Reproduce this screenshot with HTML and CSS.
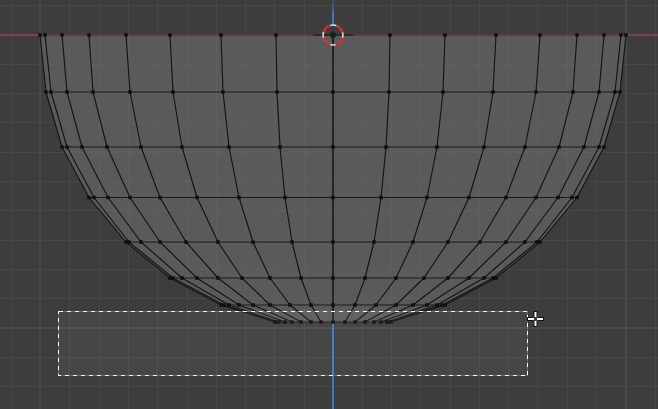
FILE: index.html
```html
<!DOCTYPE html>
<html lang="en">
<head>
<meta charset="utf-8">
<title>Viewport</title>
<link rel="stylesheet" href="styles.css">
</head>
<body>
<svg class="viewport" width="658" height="409" viewBox="0 0 658 409" xmlns="http://www.w3.org/2000/svg">
  <defs>
    <linearGradient id="blueFade" gradientUnits="userSpaceOnUse" x1="0" y1="0" x2="0" y2="16">
      <stop offset="0" stop-color="#3f4a56"/>
      <stop offset="1" stop-color="#4079b8"/>
    </linearGradient>
    <clipPath id="meshClip">
      <path d="M40 35H626L620 92 604 147 577 197.5 540 242 496 278 445 305 391 322H275L221 305 170 278 126 242 89 197.5 62 147 46 92Z"/>
    </clipPath>
  </defs>
  <path class="grid" d="M11.5 0V409M69.5 0V409M99.5 0V409M128.5 0V409M157.5 0V409M187.5 0V409M216.5 0V409M245.5 0V409M274.5 0V409M304.5 0V409M362.5 0V409M391.5 0V409M420.5 0V409M450.5 0V409M479.5 0V409M508.5 0V409M537.5 0V409M567.5 0V409M596.5 0V409M655.5 0V409M0 5.5H658M0 64.5H658M0 93.5H658M0 122.5H658M0 152.5H658M0 181.5H658M0 210.5H658M0 240.5H658M0 269.5H658M0 298.5H658M0 357.5H658M0 386.5H658"/>
  <path class="grid-major" d="M40 0V409M626 0V409M0 328H658"/>
  <path class="axis-red" d="M0 35H658"/>
  <path class="axis-blue-top" d="M333 0V30"/>
  <path class="axis-blue" d="M333 30V409"/>
  <path class="mesh-fill" d="M40 35H626L620 92 604 147 577 197.5 540 242 496 278 445 305 391 322H275L221 305 170 278 126 242 89 197.5 62 147 46 92Z"/>
  <g class="mesh-clip">
    <path class="grid-over" d="M69.5 0V409M99.5 0V409M128.5 0V409M157.5 0V409M187.5 0V409M216.5 0V409M245.5 0V409M274.5 0V409M304.5 0V409M362.5 0V409M391.5 0V409M420.5 0V409M450.5 0V409M479.5 0V409M508.5 0V409M537.5 0V409M567.5 0V409M596.5 0V409M0 64.5H658M0 93.5H658M0 122.5H658M0 152.5H658M0 181.5H658M0 210.5H658M0 240.5H658M0 269.5H658M0 298.5H658"/>
  </g>
  <path class="axis-dark-red" d="M40 35H626"/>
  <path class="axis-dark-blue" d="M333 35V322"/>
  <g class="edges">
    <path d="M40 35L46 92 62 147 89 197.5 126 242 170 278 221 305 275 322"/>
    <path d="M45 35L51 92 67 147 94 197.5 129 242 173 278 224 305 277 322"/>
    <path d="M62 35L67 92 82 147 108 197.5 141 242 182 278 229 305 279 322"/>
    <path d="M89 35L93 92 107 147 130 197.5 160 242 197 278 239 305 285 322"/>
    <path d="M126 35L130 92 141 147 160 197.5 186 242 218 278 253 305 292 322"/>
    <path d="M170 35L173 92 182 147 197 197.5 218 242 242 278 270 305 301 322"/>
    <path d="M221 35L223 92 229 147 239 197.5 253 242 270 278 290 305 311 322"/>
    <path d="M276 35L277 92 280 147 285 197.5 292 242 301 278 311 305 321 322"/>
    <path d="M333 35V322"/>
    <path d="M390 35L389 92 386 147 381 197.5 374 242 365 278 355 305 345 322"/>
    <path d="M445 35L443 92 437 147 427 197.5 413 242 396 278 376 305 355 322"/>
    <path d="M496 35L493 92 484 147 469 197.5 448 242 424 278 396 305 365 322"/>
    <path d="M540 35L536 92 525 147 506 197.5 480 242 448 278 413 305 374 322"/>
    <path d="M577 35L573 92 559 147 536 197.5 506 242 469 278 427 305 381 322"/>
    <path d="M604 35L599 92 584 147 558 197.5 525 242 484 278 437 305 387 322"/>
    <path d="M621 35L615 92 599 147 572 197.5 537 242 493 278 442 305 389 322"/>
    <path d="M626 35L620 92 604 147 577 197.5 540 242 496 278 445 305 391 322"/>
  </g>
  <g class="rows">
    <path d="M46 92H620"/>
    <path d="M62 147H604"/>
    <path d="M89 197.5H577"/>
    <path d="M126 242H540"/>
    <path d="M170 278H496"/>
    <path d="M221 305H445"/>
    <path d="M275 322H391"/>
  </g>
  <path class="verts" d="M40 35h0M45 35h0M62 35h0M89 35h0M126 35h0M170 35h0M221 35h0M276 35h0M333 35h0M390 35h0M445 35h0M496 35h0M540 35h0M577 35h0M604 35h0M621 35h0M626 35h0
  M46 92h0M51 92h0M67 92h0M93 92h0M130 92h0M173 92h0M223 92h0M277 92h0M333 92h0M389 92h0M443 92h0M493 92h0M536 92h0M573 92h0M599 92h0M615 92h0M620 92h0
  M62 147h0M67 147h0M82 147h0M107 147h0M141 147h0M182 147h0M229 147h0M280 147h0M333 147h0M386 147h0M437 147h0M484 147h0M525 147h0M559 147h0M584 147h0M599 147h0M604 147h0
  M89 197.5h0M94 197.5h0M108 197.5h0M130 197.5h0M160 197.5h0M197 197.5h0M239 197.5h0M285 197.5h0M333 197.5h0M381 197.5h0M427 197.5h0M469 197.5h0M506 197.5h0M536 197.5h0M558 197.5h0M572 197.5h0M577 197.5h0
  M126 242h0M129 242h0M141 242h0M160 242h0M186 242h0M218 242h0M253 242h0M292 242h0M333 242h0M374 242h0M413 242h0M448 242h0M480 242h0M506 242h0M525 242h0M537 242h0M540 242h0
  M170 278h0M173 278h0M182 278h0M197 278h0M218 278h0M242 278h0M270 278h0M301 278h0M333 278h0M365 278h0M396 278h0M424 278h0M448 278h0M469 278h0M484 278h0M493 278h0M496 278h0
  M221 305h0M224 305h0M229 305h0M239 305h0M253 305h0M270 305h0M290 305h0M311 305h0M333 305h0M355 305h0M376 305h0M396 305h0M413 305h0M427 305h0M437 305h0M442 305h0M445 305h0
  M275 322h0M277 322h0M279 322h0M285 322h0M292 322h0M301 322h0M311 322h0M321 322h0M333 322h0M345 322h0M355 322h0M365 322h0M374 322h0M381 322h0M387 322h0M389 322h0M391 322h0"/>
  <g class="cursor3d">
    <path class="cross" d="M313 35H353M333 25V54"/>
    <circle class="ring-white" cx="333" cy="35" r="10"/>
    <circle class="ring-red" cx="333" cy="35" r="10"/>
    <circle class="hub" cx="333" cy="35" r="3"/>
  </g>
  <rect class="box-fill" x="58.5" y="311.5" width="469" height="64"/>
  <rect class="box-base" x="58.5" y="311.5" width="469" height="64"/>
  <rect class="box-dash" x="58.5" y="311.5" width="469" height="64"/>
  <g class="mouse">
    <path class="mouse-outline" d="M527 319H533M538 319H544M535.500 311V317M535.500 321V327"/>
    <path class="mouse-white" d="M528 319H534M537 319H543M535.500 312V317M535.500 321V326"/>
  </g>
</svg>
</body>
</html>
```

FILE: styles.css
```css
html, body {
  margin: 0;
  padding: 0;
  background: #3d3d3d;
  overflow: hidden;
}

.viewport {
  display: block;
  background: #3d3d3d;
}

.grid, .grid-major, .grid-over, .axis-red, .axis-blue, .axis-blue-top, .axis-dark-red, .axis-dark-blue,
.edges path, .rows path, .verts, .cross, .ring-white, .ring-red, .box-base, .box-dash, .mouse path {
  fill: none;
}

.grid { stroke: #464646; stroke-width: 1; }
.grid-major { stroke: #494949; stroke-width: 2; }
.mesh-clip { clip-path: url(#meshClip); }
.grid-over { stroke: #5f5f5f; stroke-width: 1; }

.axis-red { stroke: #84404f; stroke-width: 2; }
.axis-blue { stroke: #3f78b8; stroke-width: 2; }
.axis-blue-top { stroke: url(#blueFade); stroke-width: 2; }

.mesh-fill { fill: #5a5a5a; }

.axis-dark-red { stroke: #5e3a42; stroke-width: 2; }
.axis-dark-blue { stroke: #2f4258; stroke-width: 2; }

.edges path { stroke: #141414; stroke-width: 1.15; stroke-linejoin: round; }
.rows path { stroke: #1a1a1a; stroke-width: 1.15; }

.verts {
  stroke: #0e0e0e;
  stroke-width: 3.4;
  stroke-linecap: square;
}

.cross { stroke: #222222; stroke-width: 1.5; }
.ring-white { stroke: #dddddd; stroke-width: 1.5; }
.ring-red { stroke: #e0141a; stroke-width: 1.7; stroke-dasharray: 10 5.7; stroke-dashoffset: 12.85; }
.hub { fill: #1c1c1c; }

.box-fill { fill: #ffffff; fill-opacity: 0.05; }
.box-base { stroke: #6a6a6a; stroke-width: 1; }
.box-dash { stroke: #ffffff; stroke-width: 1; stroke-dasharray: 4 4; shape-rendering: crispEdges; }

.mouse-outline { stroke: #111111; stroke-width: 4; }
.mouse-white { stroke: #ffffff; stroke-width: 2; }
```
